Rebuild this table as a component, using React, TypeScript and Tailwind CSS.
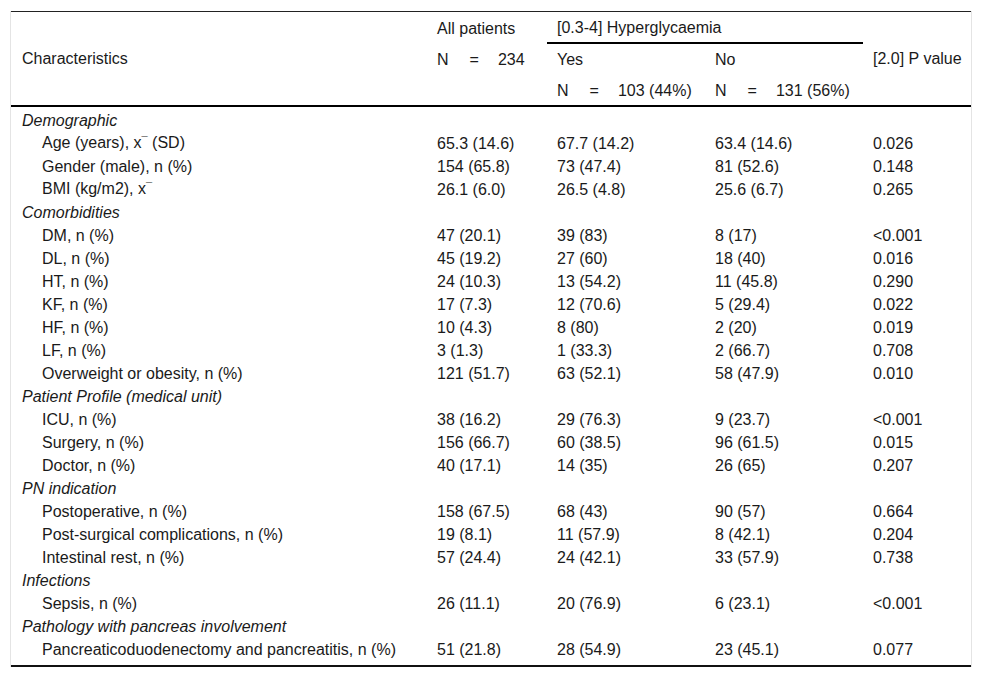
import type { ReactNode } from "react"

const Xbar = () => (
  <>
    x<span className="relative -top-[3px] text-[11px]">¯</span>
  </>
)

const rows: { label: ReactNode; group?: boolean; all?: string; yes?: string; no?: string; p?: string }[] = [
  { label: "Demographic", group: true },
  { label: <>Age (years), <Xbar /> (SD)</>, all: "65.3 (14.6)", yes: "67.7 (14.2)", no: "63.4 (14.6)", p: "0.026" },
  { label: "Gender (male), n (%)", all: "154 (65.8)", yes: "73 (47.4)", no: "81 (52.6)", p: "0.148" },
  { label: <>BMI (kg/m2), <Xbar /></>, all: "26.1 (6.0)", yes: "26.5 (4.8)", no: "25.6 (6.7)", p: "0.265" },
  { label: "Comorbidities", group: true },
  { label: "DM, n (%)", all: "47 (20.1)", yes: "39 (83)", no: "8 (17)", p: "<0.001" },
  { label: "DL, n (%)", all: "45 (19.2)", yes: "27 (60)", no: "18 (40)", p: "0.016" },
  { label: "HT, n (%)", all: "24 (10.3)", yes: "13 (54.2)", no: "11 (45.8)", p: "0.290" },
  { label: "KF, n (%)", all: "17 (7.3)", yes: "12 (70.6)", no: "5 (29.4)", p: "0.022" },
  { label: "HF, n (%)", all: "10 (4.3)", yes: "8 (80)", no: "2 (20)", p: "0.019" },
  { label: "LF, n (%)", all: "3 (1.3)", yes: "1 (33.3)", no: "2 (66.7)", p: "0.708" },
  { label: "Overweight or obesity, n (%)", all: "121 (51.7)", yes: "63 (52.1)", no: "58 (47.9)", p: "0.010" },
  { label: "Patient Profile (medical unit)", group: true },
  { label: "ICU, n (%)", all: "38 (16.2)", yes: "29 (76.3)", no: "9 (23.7)", p: "<0.001" },
  { label: "Surgery, n (%)", all: "156 (66.7)", yes: "60 (38.5)", no: "96 (61.5)", p: "0.015" },
  { label: "Doctor, n (%)", all: "40 (17.1)", yes: "14 (35)", no: "26 (65)", p: "0.207" },
  { label: "PN indication", group: true },
  { label: "Postoperative, n (%)", all: "158 (67.5)", yes: "68 (43)", no: "90 (57)", p: "0.664" },
  { label: "Post-surgical complications, n (%)", all: "19 (8.1)", yes: "11 (57.9)", no: "8 (42.1)", p: "0.204" },
  { label: "Intestinal rest, n (%)", all: "57 (24.4)", yes: "24 (42.1)", no: "33 (57.9)", p: "0.738" },
  { label: "Infections", group: true },
  { label: "Sepsis, n (%)", all: "26 (11.1)", yes: "20 (76.9)", no: "6 (23.1)", p: "<0.001" },
  { label: "Pathology with pancreas involvement", group: true },
  { label: "Pancreaticoduodenectomy and pancreatitis, n (%)", all: "51 (21.8)", yes: "28 (54.9)", no: "23 (45.1)", p: "0.077" },
]

const cols = "grid grid-cols-[416px_120px_158px_158px_1fr]"

function NCount({ n }: { n: string }) {
  return (
    <span className="flex items-center">
      <span>N</span>
      <span className="ml-[21px]">=</span>
      <span className="ml-[19px]">{n}</span>
    </span>
  )
}

export default function App() {
  return (
    <div className="min-h-screen bg-white px-[10px] pt-[11px] text-[16px] leading-[19px] text-[#1a1a1a] [font-family:'Liberation_Sans',Arial,sans-serif]">
      <div className="border-x border-[#e4e4e4]">
        {/* Header */}
        <div className={`${cols} grid-rows-[32px_31px_30px] border-t border-t-[#222] border-b-2 border-b-black`}>
          <div className="row-span-3 flex items-center pl-[11px]">Characteristics</div>
          <div className="flex items-center pl-[10px]">All patients</div>
          <div className="col-span-2 flex items-center border-b-2 border-black pl-[10px]">[0.3-4] Hyperglycaemia</div>
          <div className="row-span-3 flex items-center pl-[10px]">[2.0] P value</div>
          <div className="flex items-center pl-[10px]"><NCount n="234" /></div>
          <div className="flex items-center pl-[10px]">Yes</div>
          <div className="flex items-center pl-[10px]">No</div>
          <div />
          <div className="flex items-center pl-[10px]"><NCount n="103 (44%)" /></div>
          <div className="flex items-center pl-[10px]"><NCount n="131 (56%)" /></div>
        </div>

        {/* Body */}
        <div className="border-b-2 border-b-[#111] pt-[2px] pb-[4px]">
          {rows.map((r, i) =>
            r.group ? (
              <div key={i} className={`${cols} h-[23px] items-center`}>
                <div className="col-span-5 pl-[11px] italic">{r.label}</div>
              </div>
            ) : (
              <div key={i} className={`${cols} h-[23px] items-center`}>
                <div className="pl-[31px]">{r.label}</div>
                <div className="pl-[10px]">{r.all}</div>
                <div className="pl-[10px]">{r.yes}</div>
                <div className="pl-[10px]">{r.no}</div>
                <div className="pl-[10px]">{r.p}</div>
              </div>
            )
          )}
        </div>
      </div>
    </div>
  )
}
